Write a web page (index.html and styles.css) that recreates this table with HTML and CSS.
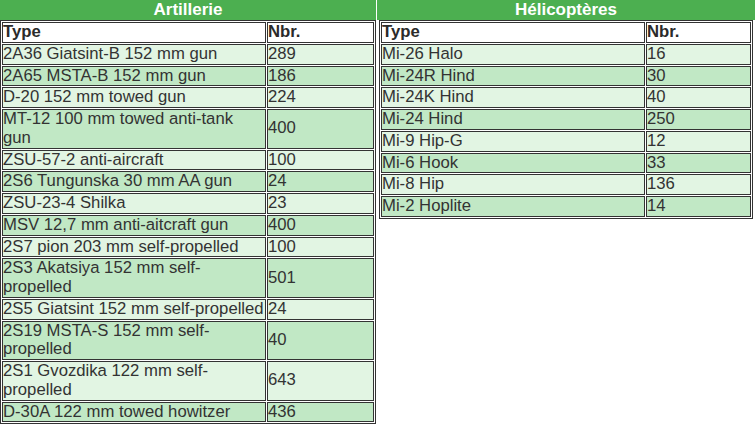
FILE: index.html
```html
<!DOCTYPE html>
<html lang="fr">
<head>
<meta charset="utf-8">
<title>Artillerie et Hélicoptères</title>
<link rel="stylesheet" href="styles.css">
</head>
<body>
<div class="wrap">
  <section class="col col-left">
    <h2 class="cap">Artillerie</h2>
    <table class="grid">
      <colgroup><col class="k-type"><col class="k-nbr"></colgroup>
      <thead>
        <tr><th>Type</th><th>Nbr.</th></tr>
      </thead>
      <tbody>
        <tr><td>2A36 Giatsint-B 152 mm gun</td><td>289</td></tr>
        <tr><td>2A65 MSTA-B 152 mm gun</td><td>186</td></tr>
        <tr><td>D-20 152 mm towed gun</td><td>224</td></tr>
        <tr><td>MT-12 100 mm towed anti-tank gun</td><td>400</td></tr>
        <tr><td>ZSU-57-2 anti-aircraft</td><td>100</td></tr>
        <tr><td>2S6 Tungunska 30 mm AA gun</td><td>24</td></tr>
        <tr><td>ZSU-23-4 Shilka</td><td>23</td></tr>
        <tr><td>MSV 12,7 mm anti-aitcraft gun</td><td>400</td></tr>
        <tr><td>2S7 pion 203 mm self-propelled</td><td>100</td></tr>
        <tr><td>2S3 Akatsiya 152 mm self-propelled</td><td>501</td></tr>
        <tr><td>2S5 Giatsint 152 mm self-propelled</td><td>24</td></tr>
        <tr><td>2S19 MSTA-S 152 mm self-propelled</td><td>40</td></tr>
        <tr><td>2S1 Gvozdika 122 mm self-propelled</td><td>643</td></tr>
        <tr><td>D-30A 122 mm towed howitzer</td><td>436</td></tr>
      </tbody>
    </table>
  </section>
  <section class="col col-right">
    <h2 class="cap">Hélicoptères</h2>
    <table class="grid grid-right">
      <colgroup><col class="k-type"><col class="k-nbr"></colgroup>
      <thead>
        <tr><th>Type</th><th>Nbr.</th></tr>
      </thead>
      <tbody>
        <tr><td>Mi-26 Halo</td><td>16</td></tr>
        <tr><td>Mi-24R Hind</td><td>30</td></tr>
        <tr><td>Mi-24K Hind</td><td>40</td></tr>
        <tr><td>Mi-24 Hind</td><td>250</td></tr>
        <tr><td>Mi-9 Hip-G</td><td>12</td></tr>
        <tr><td>Mi-6 Hook</td><td>33</td></tr>
        <tr><td>Mi-8 Hip</td><td>136</td></tr>
        <tr><td>Mi-2 Hoplite</td><td>14</td></tr>
      </tbody>
    </table>
  </section>
</div>
</body>
</html>
```
FILE: styles.css
```css
html, body {
  margin: 0;
  padding: 0;
  background: #ffffff;
}

body {
  font-family: "Liberation Sans", Arial, sans-serif;
  font-size: 16.7px;
  color: #333333;
}

.wrap {
  display: flex;
  align-items: flex-start;
  gap: 1px;
}

.col-left {
  width: 376px;
}

.col-right {
  width: 378px;
}

.cap {
  margin: 0;
  height: 20px;
  line-height: 20px;
  background: #4caf50;
  color: #ffffff;
  font-size: 17px;
  font-weight: bold;
  text-align: center;
}

.grid {
  width: 376px;
  border: 1px solid #333333;
  border-spacing: 1px;
  border-collapse: separate;
  table-layout: fixed;
  background: #ffffff;
}

.grid-right {
  width: 374px;
  margin-left: 2px;
}

.grid .k-type {
  width: 264px;
}

.grid .k-nbr {
  width: 107px;
}

.grid-right .k-nbr {
  width: 105px;
}

.grid th,
.grid td {
  border: 1px solid #333333;
  padding: 0;
  line-height: 18.75px;
  text-align: left;
  vertical-align: middle;
}

.grid th {
  background: #ffffff;
  font-weight: bold;
  color: #2b2b2b;
}

.grid tbody tr:nth-child(odd) td {
  background: #e2f5e3;
}

.grid tbody tr:nth-child(even) td {
  background: #c1e8c5;
}
```
